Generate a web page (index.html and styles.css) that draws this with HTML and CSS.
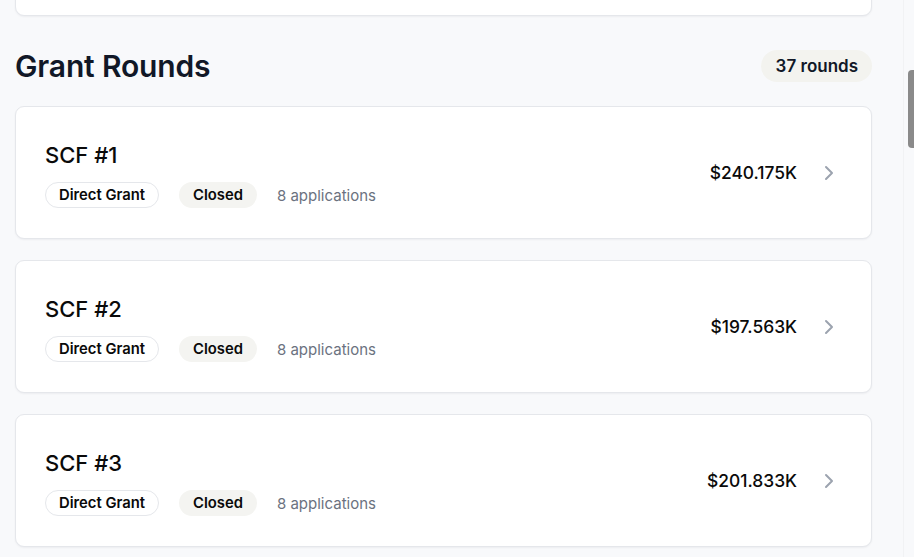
FILE: index.html
```html
<!DOCTYPE html>
<html lang="en">
<head>
<meta charset="utf-8">
<title>Grant Rounds</title>
<link rel="stylesheet" href="styles.css">
</head>
<body>
<div class="page">
  <div class="card prev-card"></div>

  <section class="rounds">
    <header class="rounds-header">
      <h2 class="rounds-title">Grant Rounds</h2>
      <span class="count-badge">37 rounds</span>
    </header>

    <div class="round-list">
      <a class="card round-card" href="#">
        <div class="round-info">
          <h3 class="round-name">SCF #1</h3>
          <div class="round-meta">
            <span class="pill pill-outline">Direct Grant</span>
            <span class="pill pill-muted">Closed</span>
            <span class="meta-text">8 applications</span>
          </div>
        </div>
        <div class="round-side">
          <span class="amount">$240.175K</span>
          <svg class="chevron" width="24" height="24" viewBox="0 0 24 24" fill="none" stroke="currentColor" stroke-width="2" stroke-linecap="round" stroke-linejoin="round"><path d="m9 18 6-6-6-6"/></svg>
        </div>
      </a>

      <a class="card round-card" href="#">
        <div class="round-info">
          <h3 class="round-name">SCF #2</h3>
          <div class="round-meta">
            <span class="pill pill-outline">Direct Grant</span>
            <span class="pill pill-muted">Closed</span>
            <span class="meta-text">8 applications</span>
          </div>
        </div>
        <div class="round-side">
          <span class="amount">$197.563K</span>
          <svg class="chevron" width="24" height="24" viewBox="0 0 24 24" fill="none" stroke="currentColor" stroke-width="2" stroke-linecap="round" stroke-linejoin="round"><path d="m9 18 6-6-6-6"/></svg>
        </div>
      </a>

      <a class="card round-card" href="#">
        <div class="round-info">
          <h3 class="round-name">SCF #3</h3>
          <div class="round-meta">
            <span class="pill pill-outline">Direct Grant</span>
            <span class="pill pill-muted">Closed</span>
            <span class="meta-text">8 applications</span>
          </div>
        </div>
        <div class="round-side">
          <span class="amount">$201.833K</span>
          <svg class="chevron" width="24" height="24" viewBox="0 0 24 24" fill="none" stroke="currentColor" stroke-width="2" stroke-linecap="round" stroke-linejoin="round"><path d="m9 18 6-6-6-6"/></svg>
        </div>
      </a>
    </div>
  </section>
</div>
<div class="scrollbar"><div class="scrollbar-thumb"></div></div>
</body>
</html>
```

FILE: styles.css
```css
* { box-sizing: border-box; }

html, body {
  margin: 0;
  padding: 0;
  height: 100%;
  overflow: hidden;
  background: #f8f9fb;
  font-family: Inter, "Noto Sans", "Liberation Sans", sans-serif;
  color: #111827;
}

.page {
  width: 857px;
  margin-left: 15px;
  margin-top: -60px;
}

.card {
  background: #ffffff;
  border: 1px solid #e5e7eb;
  border-radius: 9px;
  box-shadow: 0 1px 2px rgba(16, 24, 40, 0.05);
}

.prev-card {
  height: 76px;
}

.rounds {
  margin-top: 34px;
}

.rounds-header {
  display: flex;
  align-items: center;
  justify-content: space-between;
  height: 32px;
  margin-bottom: 24px;
}

.rounds-title {
  margin: 0;
  font-size: 30px;
  font-weight: 600;
  letter-spacing: -0.15px;
  color: #111827;
  line-height: 36px;
}

.count-badge {
  display: inline-flex;
  align-items: center;
  height: 32px;
  padding: 0 14px 0 15px;
  border-radius: 999px;
  background: #f3f3ef;
  font-size: 17px;
  font-weight: 600;
  color: #111827;
}

.round-list {
  display: flex;
  flex-direction: column;
  gap: 21px;
}

.round-card {
  display: flex;
  align-items: center;
  justify-content: space-between;
  padding: 33px 30px 30px 29px;
  text-decoration: none;
  color: inherit;
}

.round-side {
  margin-top: -3px;
}

.round-info {
  display: flex;
  flex-direction: column;
  gap: 11px;
}

.round-name {
  margin: 0;
  font-size: 22px;
  font-weight: 500;
  line-height: 31px;
  color: #0a0a0a;
}

.round-meta {
  display: flex;
  align-items: center;
  gap: 20px;
}

.pill {
  display: inline-flex;
  align-items: center;
  height: 26px;
  padding: 0 13px;
  border-radius: 999px;
  font-size: 14.8px;
  font-weight: 600;
  color: #0a0a0a;
}

.pill-outline {
  background: #ffffff;
  border: 1px solid #e5e7eb;
}

.pill-muted {
  background: #f4f4f1;
  padding: 0 14px;
}

.meta-text {
  font-size: 15px;
  color: #6b7280;
}

.round-side {
  display: flex;
  align-items: center;
  gap: 20px;
}

.amount {
  font-size: 17.4px;
  font-weight: 500;
  color: #0a0a0a;
}

.chevron {
  color: #9ca3af;
  display: block;
}

.scrollbar {
  position: fixed;
  top: 0;
  right: 0;
  width: 11px;
  height: 100%;
  background: #f8f9fb;
  border-left: 1px solid #f1f2f4;
}

.scrollbar-thumb {
  position: absolute;
  top: 70px;
  left: 4px;
  width: 10px;
  height: 78px;
  border-radius: 4px;
  background: #8a8a8a;
}
```
